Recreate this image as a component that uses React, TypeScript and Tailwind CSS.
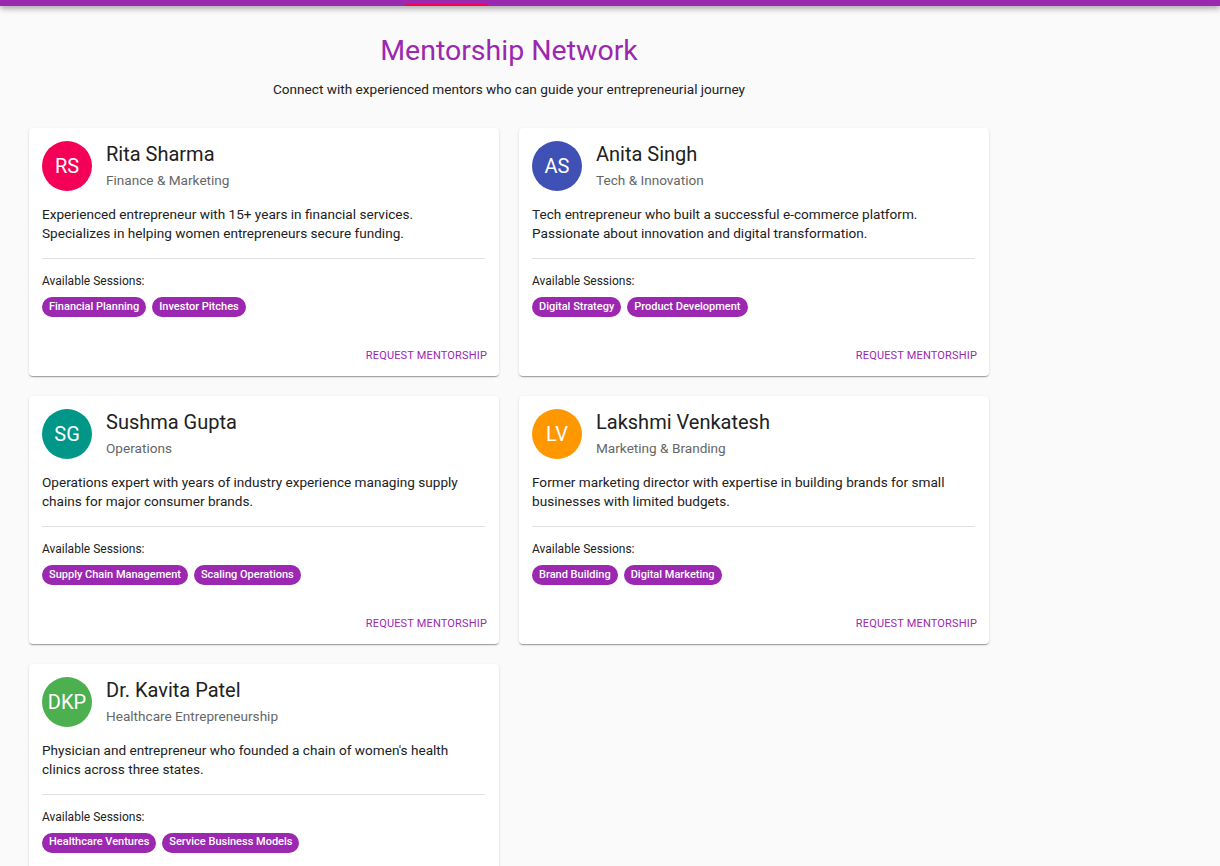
import React from "react";

type Mentor = {
  initials: string;
  name: string;
  field: string;
  bio: string;
  sessions: string[];
  color: string;
};

const mentors: Mentor[] = [
  {
    initials: "RS",
    name: "Rita Sharma",
    field: "Finance & Marketing",
    bio: "Experienced entrepreneur with 15+ years in financial services. Specializes in helping women entrepreneurs secure funding.",
    sessions: ["Financial Planning", "Investor Pitches"],
    color: "bg-[#f50057]",
  },
  {
    initials: "AS",
    name: "Anita Singh",
    field: "Tech & Innovation",
    bio: "Tech entrepreneur who built a successful e-commerce platform. Passionate about innovation and digital transformation.",
    sessions: ["Digital Strategy", "Product Development"],
    color: "bg-[#3f51b5]",
  },
  {
    initials: "SG",
    name: "Sushma Gupta",
    field: "Operations",
    bio: "Operations expert with years of industry experience managing supply chains for major consumer brands.",
    sessions: ["Supply Chain Management", "Scaling Operations"],
    color: "bg-[#009688]",
  },
  {
    initials: "LV",
    name: "Lakshmi Venkatesh",
    field: "Marketing & Branding",
    bio: "Former marketing director with expertise in building brands for small businesses with limited budgets.",
    sessions: ["Brand Building", "Digital Marketing"],
    color: "bg-[#ff9800]",
  },
  {
    initials: "DKP",
    name: "Dr. Kavita Patel",
    field: "Healthcare Entrepreneurship",
    bio: "Physician and entrepreneur who founded a chain of women's health clinics across three states.",
    sessions: ["Healthcare Ventures", "Service Business Models"],
    color: "bg-[#4caf50]",
  },
];

function MentorCard({ mentor }: { mentor: Mentor }) {
  return (
    <div className="flex flex-col bg-white rounded-[4px] shadow-[0px_2px_1px_-1px_rgba(0,0,0,0.2),0px_1px_1px_0px_rgba(0,0,0,0.14),0px_1px_3px_0px_rgba(0,0,0,0.12)] pl-[13px] pr-[14px] pt-[13px] pb-[5px]">
      {/* Header */}
      <div className="flex items-start gap-[14px]">
        <div
          className={`${mentor.color} w-[50px] h-[50px] rounded-full flex items-center justify-center text-white text-[20px] shrink-0`}
        >
          {mentor.initials}
        </div>
        <div className="flex flex-col -mt-[1px]">
          <span className="text-[20px] leading-[28px] text-[#212121]">{mentor.name}</span>
          <span className="text-[13.6px] leading-5 mt-[2px] text-[#666666]">{mentor.field}</span>
        </div>
      </div>

      <p className="mt-[14px] pr-[12px] text-[13.6px] leading-[19.45px] text-[#212121]">{mentor.bio}</p>

      <div className="mt-[14px] h-px bg-[#e0e0e0]" />

      <div className="mt-[12px] text-[12px] leading-5 text-[#212121]">Available Sessions:</div>
      <div className="mt-[6px] flex flex-wrap gap-[6px]">
        {mentor.sessions.map((s) => (
          <span
            key={s}
            className="h-[20px] px-[7px] rounded-full bg-[#9c27b0] text-white text-[11px] font-medium flex items-center"
          >
            {s}
          </span>
        ))}
      </div>

      {/* Actions */}
      <div className="mt-auto pt-[24px] flex justify-end">
        <button className="h-[30px] px-[1px] mr-[-3px] text-[11px] uppercase text-[#9c27b0] tracking-[0.015em]">
          Request Mentorship
        </button>
      </div>
    </div>
  );
}

export default function App() {
  return (
    <div className="min-h-screen bg-[#fafafa] font-['Roboto',sans-serif]">
      {/* App bar */}
      <div className="relative h-[6px] bg-[#9c27b0] shadow-[0px_2px_4px_-1px_rgba(0,0,0,0.2),0px_4px_5px_0px_rgba(0,0,0,0.14),0px_1px_10px_0px_rgba(0,0,0,0.12)]">
        <div className="absolute left-[405px] bottom-0 w-[83px] h-[2px] bg-[#f50057]" />
      </div>

      <div className="w-[1018px] px-[29px] pt-[27px] pb-10">
        <h1 className="text-center text-[28.5px] leading-[36px] text-[#9c27b0]">Mentorship Network</h1>
        <p className="mt-[10px] text-center text-[13.6px] leading-5 text-[#212121]">
          Connect with experienced mentors who can guide your entrepreneurial journey
        </p>

        <div className="mt-[29px] grid grid-cols-2 gap-[20px]">
          {mentors.map((m) => (
            <MentorCard key={m.name} mentor={m} />
          ))}
        </div>
      </div>
    </div>
  );
}
